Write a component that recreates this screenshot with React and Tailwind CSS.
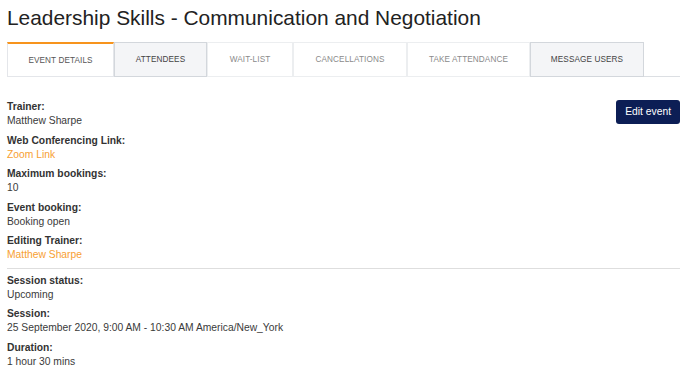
import React from 'react';

const tabs = [
  { label: 'Event details', w: 'w-[107px]', active: true },
  { label: 'Attendees', w: 'w-[93px]', shaded: true },
  { label: 'Wait-list', w: 'w-[86px]' },
  { label: 'Cancellations', w: 'w-[114px]' },
  { label: 'Take attendance', w: 'w-[123px]' },
  { label: 'Message users', w: 'w-[114px]', shaded: true },
];

function Field({ label, children, link }) {
  return (
    <div className="mb-[5.5px]">
      <div className="text-[10.3px] leading-[14px] font-bold text-[#333]">{label}</div>
      <div className={`text-[10.3px] leading-[14px] ${link ? 'text-[#f7a032]' : 'text-[#3a3a3a]'}`}>{children}</div>
    </div>
  );
}

export default function App() {
  return (
    <div className="w-[688px] h-[373px] overflow-hidden bg-white px-[7px] pt-[4px] font-['Liberation_Sans',Arial,sans-serif]">
      {/* Titulo */}
      <h1 className="text-[20.9px] leading-[28px] text-[#222]">
        Leadership Skills - Communication and Negotiation
      </h1>

      {/* Pestañas */}
      <div className="mt-[10px] flex border-b border-[#dcdfe3] w-[673px]">
        {tabs.map((t) => (
          <div
            key={t.label}
            className={`${t.w} h-[35px] -mb-px pt-[2px] flex items-center justify-center uppercase text-[8.2px] tracking-[0.1px] border ${
              t.active
                ? 'border-[#e4e6ea] border-t-2 border-t-[#f7941d] bg-white text-[#555]'
                : t.shaded
                ? 'border-[#d3d7dc] bg-[#f4f5f7] text-[#444]'
                : 'border-[#eceef0] bg-white text-[#8a8a8a]'
            }`}
          >
            {t.label}
          </div>
        ))}
      </div>

      {/* Detalles */}
      <div className="flex justify-between pt-[23px]">
        <div>
          <Field label="Trainer:">Matthew Sharpe</Field>
          <Field label="Web Conferencing Link:" link>Zoom Link</Field>
          <Field label="Maximum bookings:">10</Field>
          <Field label="Event booking:">Booking open</Field>
          <Field label="Editing Trainer:" link>Matthew Sharpe</Field>
        </div>
        <button className="self-start mr-[1px] h-[24px] px-[9px] rounded-[3px] bg-[#0c1e55] text-white text-[10.3px]">
          Edit event
        </button>
      </div>

      <div className="border-t border-[#dedede] w-[673px] mb-[5px]" />

      <Field label="Session status:">Upcoming</Field>
      <Field label="Session:">25 September 2020, 9:00 AM - 10:30 AM America/New_York</Field>
      <Field label="Duration:">1 hour 30 mins</Field>
    </div>
  );
}
